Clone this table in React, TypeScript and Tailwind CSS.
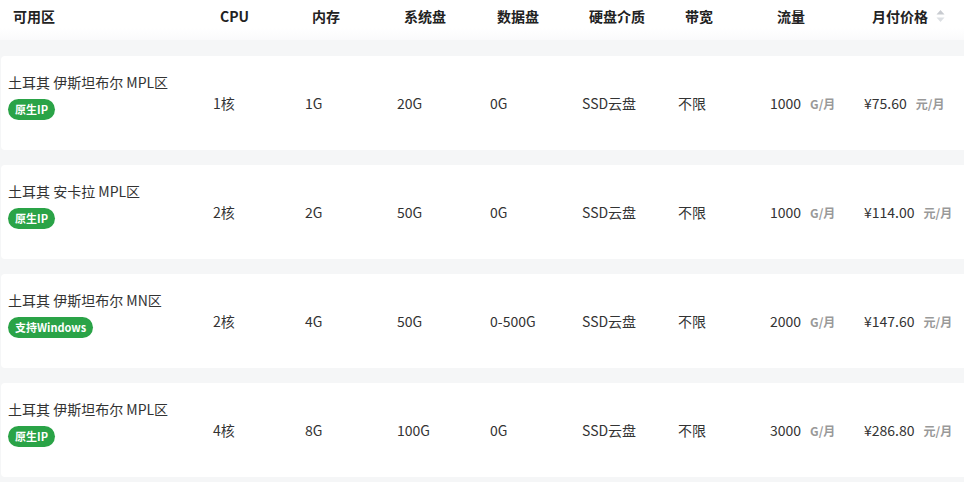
import React from "react";

type Plan = {
  zone: string;
  tag: string;
  cpu: string;
  mem: string;
  sys: string;
  data: string;
  disk: string;
  bw: string;
  traffic: string;
  price: string;
};

const plans: Plan[] = [
  { zone: "土耳其 伊斯坦布尔 MPL区", tag: "原生IP", cpu: "1核", mem: "1G", sys: "20G", data: "0G", disk: "SSD云盘", bw: "不限", traffic: "1000", price: "¥75.60" },
  { zone: "土耳其 安卡拉 MPL区", tag: "原生IP", cpu: "2核", mem: "2G", sys: "50G", data: "0G", disk: "SSD云盘", bw: "不限", traffic: "1000", price: "¥114.00" },
  { zone: "土耳其 伊斯坦布尔 MN区", tag: "支持Windows", cpu: "2核", mem: "4G", sys: "50G", data: "0-500G", disk: "SSD云盘", bw: "不限", traffic: "2000", price: "¥147.60" },
  { zone: "土耳其 伊斯坦布尔 MPL区", tag: "原生IP", cpu: "4核", mem: "8G", sys: "100G", data: "0G", disk: "SSD云盘", bw: "不限", traffic: "3000", price: "¥286.80" },
];

const headers = ["可用区", "CPU", "内存", "系统盘", "数据盘", "硬盘介质", "带宽", "流量"];

const font = { fontFamily: '"Microsoft YaHei", "Noto Sans CJK SC", "Noto Sans", sans-serif' };

function SortIcon() {
  return (
    <svg width="9" height="14" viewBox="0 0 9 14" className="ml-[8px]">
      <path d="M4.5 1 L8.5 5.5 L0.5 5.5 Z" fill="#c8cbd0" />
      <path d="M4.5 13 L8.5 8.5 L0.5 8.5 Z" fill="#dcdfe3" />
    </svg>
  );
}

export default function App() {
  return (
    <div className="w-[964px] h-[482px] overflow-hidden bg-[#f5f6f7] text-[#333]" style={font}>
      {/* Header */}
      <div className="h-[40px] bg-gradient-to-b from-white from-70% to-[#fafafb] grid grid-cols-[207px_92px_92px_93px_92px_96px_92px_95px_1fr] items-start pt-[6px] pl-[13px] text-[14px] leading-[20px] font-bold text-[#222]">
        {headers.map((h) => (
          <div key={h}>{h}</div>
        ))}
        <div className="flex items-center">
          月付价格
          <SortIcon />
        </div>
      </div>

      {/* Rows */}
      <div className="flex flex-col gap-[15px] pt-[16px] pl-[1px]">
        {plans.map((p, i) => (
          <div
            key={i}
            className="h-[94px] bg-white rounded-l-[4px] grid grid-cols-[205px_92px_92px_93px_92px_96px_92px_94px_1fr] items-center pl-[7px] text-[14px]"
          >
            <div className="self-start pt-[16px]">
              <div className="leading-[20px]">{p.zone}</div>
              <span className="mt-[7px] inline-flex h-[21px] items-center rounded-full bg-[#2aa347] px-[7px] text-[11px] font-semibold text-white">
                {p.tag}
              </span>
            </div>
            <div>{p.cpu}</div>
            <div>{p.mem}</div>
            <div>{p.sys}</div>
            <div>{p.data}</div>
            <div>{p.disk}</div>
            <div>{p.bw}</div>
            <div className="flex items-baseline">
              {p.traffic}
              <span className="ml-[9px] text-[12px] font-bold text-[#999]">G/月</span>
            </div>
            <div className="flex items-baseline">
              {p.price}
              <span className="ml-[9px] text-[12px] font-bold text-[#999]">元/月</span>
            </div>
          </div>
        ))}
      </div>
    </div>
  );
}
